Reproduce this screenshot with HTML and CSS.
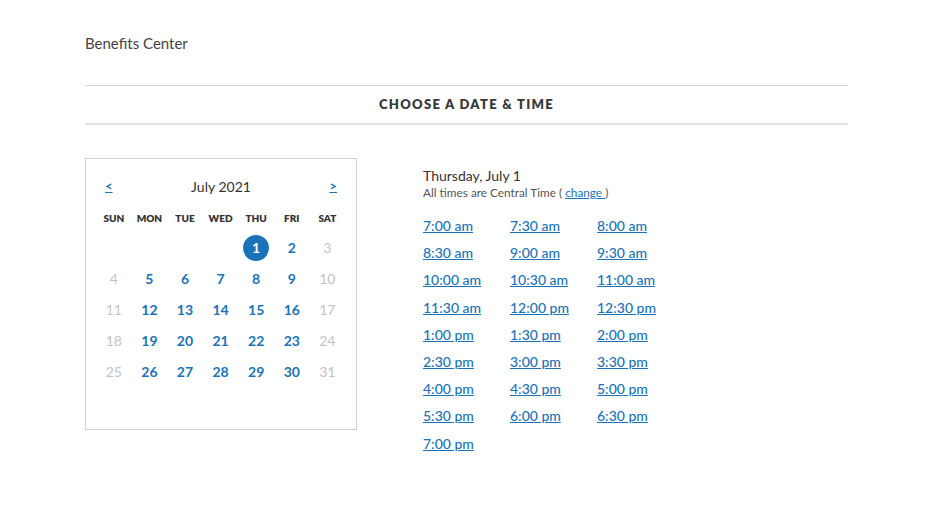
FILE: index.html
```html
<!DOCTYPE html>
<html>
<head>
<meta charset="utf-8">
<link rel="stylesheet" href="styles.css">
</head>
<body>
<div class="page">
  <div class="brand">Benefits Center</div>
  <h1 class="title">Choose a Date &amp; Time</h1>
  <div class="main">
    <div class="calendar">
      <div class="cal-head">
        <a class="nav" href="#">&lt;</a>
        <span class="month">July 2021</span>
        <a class="nav" href="#">&gt;</a>
      </div>
      <div class="grid">
        <span class="dow">SUN</span><span class="dow">MON</span><span class="dow">TUE</span><span class="dow">WED</span><span class="dow">THU</span><span class="dow">FRI</span><span class="dow">SAT</span>
        <span class="day"></span><span class="day"></span><span class="day"></span><span class="day"></span><span class="day sel"><b>1</b></span><span class="day on">2</span><span class="day off">3</span>
        <span class="day off">4</span><span class="day on">5</span><span class="day on">6</span><span class="day on">7</span><span class="day on">8</span><span class="day on">9</span><span class="day off">10</span>
        <span class="day off">11</span><span class="day on">12</span><span class="day on">13</span><span class="day on">14</span><span class="day on">15</span><span class="day on">16</span><span class="day off">17</span>
        <span class="day off">18</span><span class="day on">19</span><span class="day on">20</span><span class="day on">21</span><span class="day on">22</span><span class="day on">23</span><span class="day off">24</span>
        <span class="day off">25</span><span class="day on">26</span><span class="day on">27</span><span class="day on">28</span><span class="day on">29</span><span class="day on">30</span><span class="day off">31</span>
      </div>
    </div>
    <div class="times">
      <div class="date">Thursday, July 1</div>
      <div class="tz">All times are Central Time ( <a href="#">change </a>)</div>
      <div class="slots">
        <a href="#">7:00 am</a><a href="#">7:30 am</a><a href="#">8:00 am</a>
        <a href="#">8:30 am</a><a href="#">9:00 am</a><a href="#">9:30 am</a>
        <a href="#">10:00 am</a><a href="#">10:30 am</a><a href="#">11:00 am</a>
        <a href="#">11:30 am</a><a href="#">12:00 pm</a><a href="#">12:30 pm</a>
        <a href="#">1:00 pm</a><a href="#">1:30 pm</a><a href="#">2:00 pm</a>
        <a href="#">2:30 pm</a><a href="#">3:00 pm</a><a href="#">3:30 pm</a>
        <a href="#">4:00 pm</a><a href="#">4:30 pm</a><a href="#">5:00 pm</a>
        <a href="#">5:30 pm</a><a href="#">6:00 pm</a><a href="#">6:30 pm</a>
        <a href="#">7:00 pm</a>
      </div>
    </div>
  </div>
</div>
</body>
</html>
```

FILE: styles.css
```css
* { box-sizing: border-box; }
html, body { margin: 0; padding: 0; background: #fff; }
body { font-family: "Lato", "Open Sans", sans-serif; color: #333; }
.page { width: 763px; margin-left: 85px; padding-top: 34px; }
.brand { font-size: 15px; line-height: 18px; color: #444; }
.title {
  margin: 33px 0 0;
  border-top: 1px solid #d6d6d6;
  border-bottom: 2px solid #e2e2e2;
  height: 40px;
  line-height: 37px;
  text-align: center;
  font-size: 13px;
  font-weight: 800;
  letter-spacing: 1.3px;
  text-transform: uppercase;
  color: #3a3a3a;
}
.main { display: flex; gap: 66px; margin-top: 33px; align-items: flex-start; }
.calendar {
  width: 272px; height: 272px;
  border: 1px solid #cfcfcf;
  padding: 17px 10px 0 10px;
}
.cal-head { display: flex; justify-content: space-between; align-items: center; padding: 0 9px 0 9px; height: 20px; }
.nav { color: #1a73b8; font-size: 13px; font-weight: 700; text-decoration: underline; }
.month { font-size: 14px; color: #333; }
.grid {
  display: grid;
  grid-template-columns: repeat(7, 35.6px);
  grid-template-rows: 27px repeat(5, 31px);
  margin-top: 9px;
}
.dow { font-size: 10px; font-weight: 800; color: #333; text-align: center; line-height: 27px; height: 27px; }
.day { display: flex; align-items: center; justify-content: center; font-size: 14px; }
.day.on { color: #1a73b8; font-weight: 700; }
.day.off { color: #c4c4c4; }
.day.sel b {
  display: flex; align-items: center; justify-content: center;
  width: 26px; height: 26px; border-radius: 50%;
  background: #1a73b8; color: #fff; font-weight: 700;
}
.times { padding-top: 9px; }
.date { font-size: 14px; color: #333; line-height: 17px; }
.tz { font-size: 11.8px; color: #555; margin-top: 1px; line-height: 15px; }
.tz a { color: #1a73b8; text-decoration: underline; }
.slots {
  display: grid;
  grid-template-columns: repeat(3, 87px);
  grid-auto-rows: 27.2px;
  margin-top: 17px;
}
.slots a { color: #1a73b8; font-size: 14px; text-decoration: underline; line-height: 17px; font-weight: 500; }
```
